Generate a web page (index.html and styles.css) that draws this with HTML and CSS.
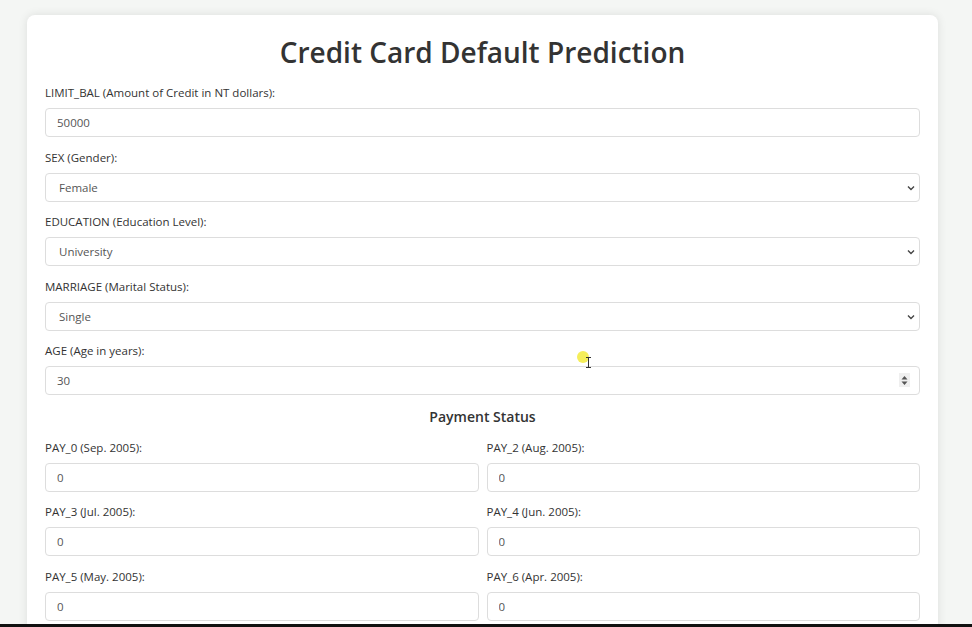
FILE: index.html
```html
<!DOCTYPE html>
<html lang="en">
<head>
<meta charset="utf-8">
<title>Credit Card Default Prediction</title>
<link rel="stylesheet" href="styles.css">
</head>
<body>
<main class="card">
  <h1 class="title">Credit Card Default Prediction</h1>
  <form class="form">
    <div class="group">
      <label class="label" for="limit">LIMIT_BAL (Amount of Credit in NT dollars):</label>
      <input class="field" id="limit" type="text" value="50000">
    </div>
    <div class="group">
      <label class="label" for="sex">SEX (Gender):</label>
      <div class="select-wrap">
        <select class="field select" id="sex"><option>Female</option><option>Male</option></select>
        <svg class="chev" width="8" height="6" viewBox="0 0 8 6"><path d="M1 1.5 L4 4.5 L7 1.5" fill="none" stroke="#444" stroke-width="1.4"/></svg>
      </div>
    </div>
    <div class="group">
      <label class="label" for="edu">EDUCATION (Education Level):</label>
      <div class="select-wrap">
        <select class="field select" id="edu"><option>University</option><option>Graduate School</option><option>High School</option></select>
        <svg class="chev" width="8" height="6" viewBox="0 0 8 6"><path d="M1 1.5 L4 4.5 L7 1.5" fill="none" stroke="#444" stroke-width="1.4"/></svg>
      </div>
    </div>
    <div class="group">
      <label class="label" for="mar">MARRIAGE (Marital Status):</label>
      <div class="select-wrap">
        <select class="field select" id="mar"><option>Single</option><option>Married</option><option>Others</option></select>
        <svg class="chev" width="8" height="6" viewBox="0 0 8 6"><path d="M1 1.5 L4 4.5 L7 1.5" fill="none" stroke="#444" stroke-width="1.4"/></svg>
      </div>
    </div>
    <div class="group">
      <label class="label" for="age">AGE (Age in years):</label>
      <div class="select-wrap">
        <input class="field number" id="age" type="number" value="30">
        <span class="spin"><svg width="9" height="11" viewBox="0 0 9 11"><path d="M4.5 1 L7.5 4.5 L1.5 4.5 Z M4.5 10 L7.5 6.5 L1.5 6.5 Z" fill="#555"/></svg></span>
      </div>
    </div>

    <h2 class="section">Payment Status</h2>
    <div class="grid">
      <div class="group">
        <label class="label" for="p0">PAY_0 (Sep. 2005):</label>
        <input class="field" id="p0" type="text" value="0">
      </div>
      <div class="group">
        <label class="label" for="p2">PAY_2 (Aug. 2005):</label>
        <input class="field" id="p2" type="text" value="0">
      </div>
      <div class="group">
        <label class="label" for="p3">PAY_3 (Jul. 2005):</label>
        <input class="field" id="p3" type="text" value="0">
      </div>
      <div class="group">
        <label class="label" for="p4">PAY_4 (Jun. 2005):</label>
        <input class="field" id="p4" type="text" value="0">
      </div>
      <div class="group">
        <label class="label" for="p5">PAY_5 (May. 2005):</label>
        <input class="field" id="p5" type="text" value="0">
      </div>
      <div class="group">
        <label class="label" for="p6">PAY_6 (Apr. 2005):</label>
        <input class="field" id="p6" type="text" value="0">
      </div>
    </div>
  </form>
</main>
<span class="cursor-dot"></span>
<svg class="ibeam" width="7" height="11" viewBox="0 0 7 11"><path d="M1 0.5 H6 M3.5 0.5 V10.5 M1 10.5 H6" fill="none" stroke="#333" stroke-width="1"/></svg>
<div class="bottom-bar"></div>
</body>
</html>
```

FILE: styles.css
```css
html, body {
  margin: 0;
  padding: 0;
}
body {
  background: #f4f6f4;
  font-family: "Open Sans", "Noto Sans", "Liberation Sans", sans-serif;
  color: #333;
  height: 627px;
  overflow: hidden;
  position: relative;
}
.card {
  width: 875px;
  margin: 15px 0 0 27px;
  padding: 17px 18px 40px;
  background: #fff;
  border-radius: 8px;
  box-shadow: 0 0 10px rgba(0, 0, 0, 0.1);
}
.title {
  margin: 0 0 12px;
  font-size: 28px;
  line-height: 40px;
  font-weight: 600;
  text-align: center;
  color: #333;
}
.form {
  display: flex;
  flex-direction: column;
}
.group {
  display: flex;
  flex-direction: column;
  margin-bottom: 11.5px;
}
.label {
  font-size: 11.5px;
  line-height: 18px;
  margin-bottom: 6px;
  color: #333;
}
.field {
  box-sizing: border-box;
  width: 100%;
  height: 29px;
  margin: 0;
  padding: 0 11px;
  border: 1px solid #ddd;
  border-radius: 4px;
  background: #fff;
  font-family: inherit;
  font-size: 11.5px;
  color: #555;
  outline: none;
}
.select-wrap {
  position: relative;
}
.select {
  appearance: none;
  -webkit-appearance: none;
  padding-left: 13px;
}
.chev {
  position: absolute;
  right: 5px;
  top: 12px;
  pointer-events: none;
}
.number {
  appearance: textfield;
  -moz-appearance: textfield;
}
.number::-webkit-inner-spin-button,
.number::-webkit-outer-spin-button {
  -webkit-appearance: none;
  margin: 0;
}
.spin {
  position: absolute;
  right: 10px;
  top: 7px;
  width: 11px;
  height: 14px;
  background: #efefef;
  display: flex;
  align-items: center;
  justify-content: center;
}
.section {
  margin: 0 0 12px;
  font-size: 14px;
  line-height: 20px;
  font-weight: 600;
  text-align: center;
  color: #333;
}
.grid {
  display: grid;
  grid-template-columns: 1fr 1fr;
  column-gap: 8px;
}
.cursor-dot {
  position: absolute;
  left: 577px;
  top: 351px;
  width: 12px;
  height: 12px;
  border-radius: 50%;
  background: #f5ee5a;
}
.ibeam {
  position: absolute;
  left: 585px;
  top: 357px;
}
.bottom-bar {
  position: absolute;
  left: 0;
  right: 0;
  top: 624px;
  height: 3px;
  background: #111;
}
```
